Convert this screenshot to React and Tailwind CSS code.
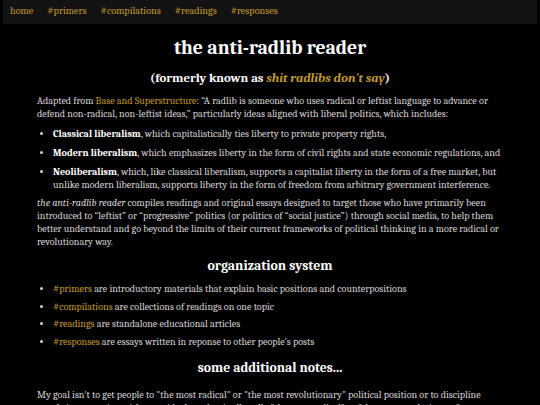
import React from 'react';

const gold = 'text-[#c49a2c]';

export default function App() {
  return (
    <div className="min-h-[405px] bg-black text-[#d4d4d4] font-serif">
      <nav className="mx-[3px] bg-[#121212] h-[24px] flex items-center gap-[14px] px-[7px] text-[10.2px]">
        <a className={gold}>home</a>
        <a className={gold}>#primers</a>
        <a className={gold}>#compilations</a>
        <a className={gold}>#readings</a>
        <a className={gold}>#responses</a>
      </nav>

      <main className="px-[37px] text-[10.1px] leading-[13px]">
        <h1 className="text-center text-white font-bold text-[19.7px] leading-[24px] mt-[12px]">the anti-radlib reader</h1>
        <h2 className="text-center text-white font-bold text-[12.8px] leading-[18px] mt-[9px]">
          (formerly known as <i className={gold}>shit radlibs don't say</i>)
        </h2>

        <p className="mt-[8px]">
          Adapted from <a className={gold}>Base and Superstructure</a>: “A radlib is someone who uses radical or leftist language to advance or defend non-radical, non-leftist ideas,” particularly ideas aligned with liberal politics, which includes:
        </p>

        <ul className="mt-[7px] pl-[16px] list-disc flex flex-col gap-[6px]">
          <li><b className="text-white">Classical liberalism</b>, which capitalistically ties liberty to private property rights,</li>
          <li><b className="text-white">Modern liberalism</b>, which emphasizes liberty in the form of civil rights and state economic regulations, and</li>
          <li><b className="text-white">Neoliberalism</b>, which, like classical liberalism, supports a capitalist liberty in the form of a free market, but unlike modern liberalism, supports liberty in the form of freedom from arbitrary government interference.</li>
        </ul>

        <p className="mt-[5px]">
          <i>the anti-radlib reader</i> compiles readings and original essays designed to target those who have primarily been introduced to “leftist” or “progressive” politics (or politics of “social justice”) through social media, to help them better understand and go beyond the limits of their current frameworks of political thinking in a more radical or revolutionary way.
        </p>

        <h3 className="text-center text-white font-bold text-[13.8px] leading-[18px] mt-[8px]">organization system</h3>

        <ul className="mt-[8px] pl-[16px] list-disc flex flex-col gap-[4.5px]">
          <li><a className={gold}>#primers</a> are introductory materials that explain basic positions and counterpositions</li>
          <li><a className={gold}>#compilations</a> are collections of readings on one topic</li>
          <li><a className={gold}>#readings</a> are standalone educational articles</li>
          <li><a className={gold}>#responses</a> are essays written in reponse to other people's posts</li>
        </ul>

        <h3 className="text-center text-white font-bold text-[13.7px] leading-[18px] mt-[10px]">some additional notes...</h3>

        <p className="mt-[12px]">
          My goal isn't to get people to "the most radical" or "the most revolutionary" political position or to discipline people into agreeing with some ideology that is allegedly "the most radical" or "the most revolutionary" or to
        </p>
      </main>
    </div>
  );
}
